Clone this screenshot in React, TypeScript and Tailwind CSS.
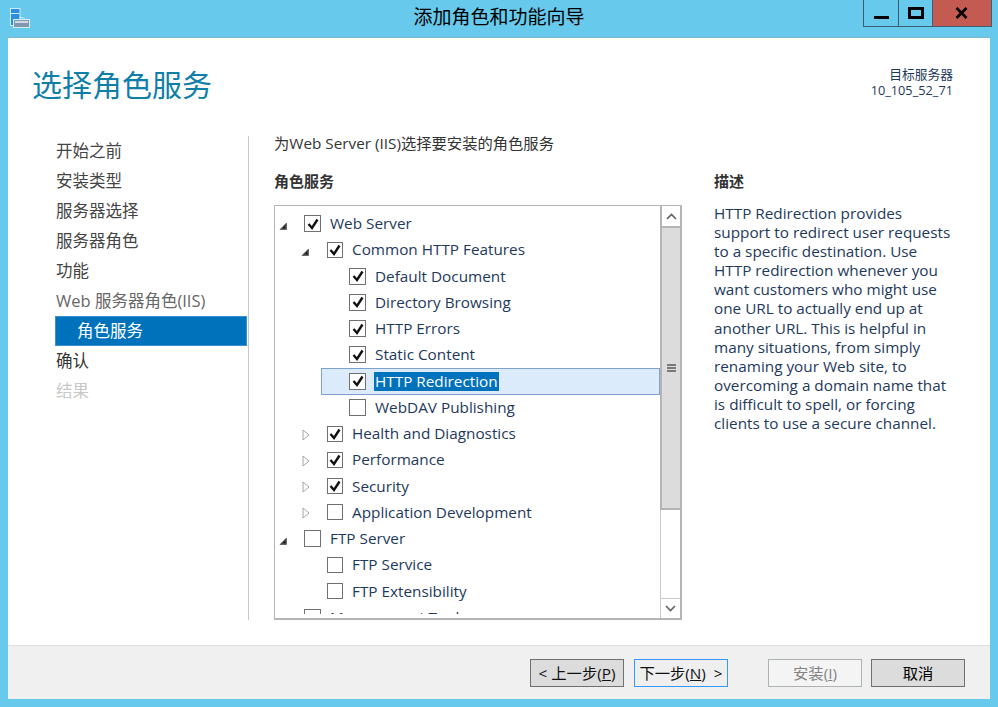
const FONT = 'font-["Open_Sans","Noto_Sans_CJK_SC",sans-serif]';

type RowT = { level: number; arrow?: "open" | "closed"; checked: boolean; label: string; selected?: boolean };

const rows: RowT[] = [
  { level: 0, arrow: "open", checked: true, label: "Web Server" },
  { level: 1, arrow: "open", checked: true, label: "Common HTTP Features" },
  { level: 2, checked: true, label: "Default Document" },
  { level: 2, checked: true, label: "Directory Browsing" },
  { level: 2, checked: true, label: "HTTP Errors" },
  { level: 2, checked: true, label: "Static Content" },
  { level: 2, checked: true, label: "HTTP Redirection", selected: true },
  { level: 2, checked: false, label: "WebDAV Publishing" },
  { level: 1, arrow: "closed", checked: true, label: "Health and Diagnostics" },
  { level: 1, arrow: "closed", checked: true, label: "Performance" },
  { level: 1, arrow: "closed", checked: true, label: "Security" },
  { level: 1, arrow: "closed", checked: false, label: "Application Development" },
  { level: 0, arrow: "open", checked: false, label: "FTP Server" },
  { level: 1, checked: false, label: "FTP Service" },
  { level: 1, checked: false, label: "FTP Extensibility" },
  { level: 0, checked: false, label: "Management Tools" },
];

const navItems = [
  { t: "开始之前", c: "text-[#444444] pl-px" },
  { t: "安装类型", c: "text-[#444444] pl-px" },
  { t: "服务器选择", c: "text-[#444444] pl-px" },
  { t: "服务器角色", c: "text-[#444444] pl-px" },
  { t: "功能", c: "text-[#444444] pl-px" },
  { t: "Web 服务器角色(IIS)", c: "text-[#666666] pl-px" },
  { t: "角色服务", c: "text-white", active: true },
  { t: "确认", c: "text-[#333333] pl-px" },
  { t: "结果", c: "text-[#c8c8c8] pl-px" },
];

const descLines = [
  "HTTP Redirection provides",
  "support to redirect user requests",
  "to a specific destination. Use",
  "HTTP redirection whenever you",
  "want customers who might use",
  "one URL to actually end up at",
  "another URL. This is helpful in",
  "many situations, from simply",
  "renaming your Web site, to",
  "overcoming a domain name that",
  "is difficult to spell, or forcing",
  "clients to use a secure channel.",
];

function Arrow({ kind }: { kind: "open" | "closed" }) {
  return kind === "open" ? (
    <svg width="8" height="8" viewBox="0 0 8 8" className="mt-[5px] shrink-0">
      <path d="M7.5 1 V7.5 H1 Z" fill="#404040" stroke="#404040" strokeWidth="0.6" />
      <path d="M6 4 V6 H4 Z" fill="#111" />
    </svg>
  ) : (
    <svg width="8" height="12" viewBox="0 0 8 12" className="mt-[2px] ml-px shrink-0">
      <path d="M1 1 L7 6 L1 11 Z" fill="#ffffff" stroke="#a6a6a6" strokeWidth="1" />
    </svg>
  );
}

function Check({ checked, small }: { checked: boolean; small: boolean }) {
  return (
    <span
      className={`flex shrink-0 items-center justify-center border border-[#707070] bg-white ${
        small ? "h-4 w-4" : "h-[17px] w-[17px]"
      }`}
    >
      {checked && (
        <svg width="12" height="12" viewBox="0 0 12 12">
          <path d="M1.5 6 L5 10 L10.5 1.5" fill="none" stroke="#111111" strokeWidth="2.4" />
        </svg>
      )}
    </span>
  );
}

function Row({ r }: { r: RowT }) {
  const pad = r.level === 0 ? "pl-[4px]" : "pl-[26px]";
  const arrowW = r.level === 0 ? "w-[25px]" : "w-[26px]";
  return (
    <div className={`relative flex h-[26.25px] shrink-0 items-center ${pad}`}>
      {r.selected && (
        <div className="absolute left-[46px] right-0 top-0 h-[27px] border border-[#7da2ce] bg-[#dcebfc]" />
      )}
      <span className={`relative flex ${arrowW} shrink-0 items-center`}>{r.arrow && <Arrow kind={r.arrow} />}</span>
      {r.level === 2 && <span className="w-[22px] shrink-0" />}
      <span className="relative">
        <Check checked={r.checked} small={r.level === 1} />
      </span>
      <span
        className={`relative ml-[8px] whitespace-nowrap px-px text-[15.3px] leading-[19px] ${
          r.selected ? "bg-[#0072bc] text-white" : "text-[#1e395b]"
        }`}
      >
        {r.label}
      </span>
    </div>
  );
}

function Button({ children, cls }: { children: React.ReactNode; cls: string }) {
  return (
    <button className={`flex h-7 w-[94px] items-center justify-center border text-[15.3px] ${cls}`}>{children}</button>
  );
}

export default function App() {
  return (
    <div className={`flex h-[707px] w-[998px] flex-col overflow-hidden bg-[#67c9ec] ${FONT}`}>
      {/* Title bar */}
      <div className="relative flex h-[37px] shrink-0 items-center justify-center pb-[2px]">
        <svg width="21" height="21" viewBox="0 0 21 21" className="absolute left-[10px] top-[8px]">
          <rect x="0.5" y="0.5" width="9.5" height="17" fill="#2a8fe0" stroke="#cfe8f8" />
          <rect x="1" y="5" width="8.5" height="1" fill="#cfe8f8" />
          <path d="M9 9.5 H13 L15 11.5" fill="none" stroke="#d8ecf6" />
          <rect x="3.5" y="11.5" width="16" height="8" fill="#8098b0" stroke="#d8ecf6" />
          <rect x="5" y="13" width="13" height="2" fill="#d0dae4" />
        </svg>
        <span className="text-[19px] leading-none text-black">添加角色和功能向导</span>
        <div className="absolute right-[6px] top-0 flex h-[27px] border-x border-b border-[#3b5f6e]">
          <div className="flex w-[35px] items-end justify-center border-r border-[#3b5f6e] pb-[7px]">
            <div className="h-[3px] w-[15px] bg-black" />
          </div>
          <div className="flex w-[33px] items-center justify-center pb-[1px]">
            <div className="h-[12px] w-[16px] border-[3px] border-black" />
          </div>
          <div className="flex w-[59px] items-center justify-center border-l border-[#3b5f6e] bg-[#c35b52] pr-[2px]">
            <svg width="13" height="12" viewBox="0 0 13 12">
              <path d="M1.5 1 L11.5 11 M11.5 1 L1.5 11" stroke="#000" strokeWidth="2.6" />
            </svg>
          </div>
        </div>
      </div>

      {/* Window content */}
      <div className="mx-[8px] flex h-[662px] flex-col border-t border-[#7fb4cc] bg-white">
        <div className="flex min-h-0 flex-1 flex-col">
          {/* Header */}
          <div className="flex h-[98px] shrink-0 justify-between pl-[24px] pr-[37px] pt-[27px]">
            <h1 className="text-[30px] font-normal leading-[40px] text-[#0f7ea8]">选择角色服务</h1>
            <div className="pt-px text-right text-[12.75px] leading-[16px] text-[#1e395b]">
              <div>目标服务器</div>
              <div>10_105_52_71</div>
            </div>
          </div>

          <div className="flex min-h-0 flex-1">
            {/* Left nav */}
            <nav className="flex h-[484px] w-[241px] shrink-0 flex-col border-r border-[#c8c8c8] pl-[47px]">
              {navItems.map((n) => (
                <div
                  key={n.t}
                  className={`flex h-[30px] shrink-0 items-center text-[16.5px] leading-none ${n.c} ${
                    n.active ? "w-[192px] border border-[#3a93d0] bg-[#0072bc] pl-[21px]" : ""
                  }`}
                >
                  {n.t}
                </div>
              ))}
            </nav>

            {/* Main */}
            <div className="flex min-w-0 flex-1 flex-col pl-[25px]">
              <div className="flex h-[36px] items-start text-[15.3px] leading-[14px] text-[#333]">
                为Web Server (IIS)选择要安装的角色服务
              </div>
              <div className="flex">
                <div className="w-[408px] shrink-0">
                  <div className="flex h-[33px] items-start text-[15px] font-bold leading-[18px] text-[#333]">角色服务</div>
                  {/* List box */}
                  <div className="flex h-[415px] w-[408px] border-b-2 border-l border-r-2 border-t border-[#b4b4b4]">
                    <div className="min-w-0 flex-1">
                      <div className="flex h-[408px] flex-col overflow-hidden pt-[4.5px]">
                        {rows.map((r) => (
                          <Row key={r.label} r={r} />
                        ))}
                      </div>
                    </div>
                    {/* Scrollbar */}
                    <div className="flex w-[20px] shrink-0 flex-col bg-white">
                      <div className="flex h-[20px] shrink-0 items-center justify-center border-l-2 border-[#b4b4b4]">
                        <svg width="11" height="7" viewBox="0 0 11 7">
                          <path d="M1 6 L5.5 1.5 L10 6" fill="none" stroke="#606060" strokeWidth="1.6" />
                        </svg>
                      </div>
                      <div className="flex h-[284px] shrink-0 items-center justify-center border-2 border-r-0 border-[#b4b4b4] bg-[#dcdcdc]">
                        <div className="flex flex-col gap-px">
                          <div className="h-[2px] w-[9px] bg-[#7a7a7a]" />
                          <div className="h-[2px] w-[9px] bg-[#7a7a7a]" />
                          <div className="h-[2px] w-[9px] bg-[#7a7a7a]" />
                        </div>
                      </div>
                      <div className="flex-1 border-l border-[#c8c8c8]" />
                      <div className="flex h-[20px] shrink-0 items-center justify-center border-l border-t border-[#c8c8c8]">
                        <svg width="11" height="7" viewBox="0 0 11 7">
                          <path d="M1 1 L5.5 5.5 L10 1" fill="none" stroke="#606060" strokeWidth="1.6" />
                        </svg>
                      </div>
                    </div>
                  </div>
                </div>
                {/* Description */}
                <div className="ml-[32px] min-w-0 flex-1">
                  <div className="flex h-[22px] items-start text-[15px] font-bold leading-[18px] text-[#333]">描述</div>
                  <div className="mt-[10px] text-[15.3px] leading-[19.1px] text-[#1e395b]">
                    {descLines.map((l) => (
                      <div key={l} className="whitespace-nowrap">
                        {l}
                      </div>
                    ))}
                  </div>
                </div>
              </div>
            </div>
          </div>
        </div>

        {/* Footer */}
        <div className="flex h-[54px] shrink-0 items-start border-t border-[#dfdfdf] bg-[#f0f0f0] pl-[522px] pt-[13px]">
          <Button cls="border-[#707070] bg-[#dcdcdc] text-[#111]">
            <span>&lt; 上一步(<u>P</u>)</span>
          </Button>
          <Button cls="ml-[10px] border-[#3399ff] bg-[#efefef] text-[#111]">
            <span>下一步(<u>N</u>)&nbsp; &gt;</span>
          </Button>
          <Button cls="ml-[40px] border-[#adb2b5] bg-[#f4f4f4] text-[#838383]">
            <span>安装(<u>I</u>)</span>
          </Button>
          <Button cls="ml-[9px] border-[#707070] bg-[#dcdcdc] text-black">取消</Button>
        </div>
      </div>
    </div>
  );
}
